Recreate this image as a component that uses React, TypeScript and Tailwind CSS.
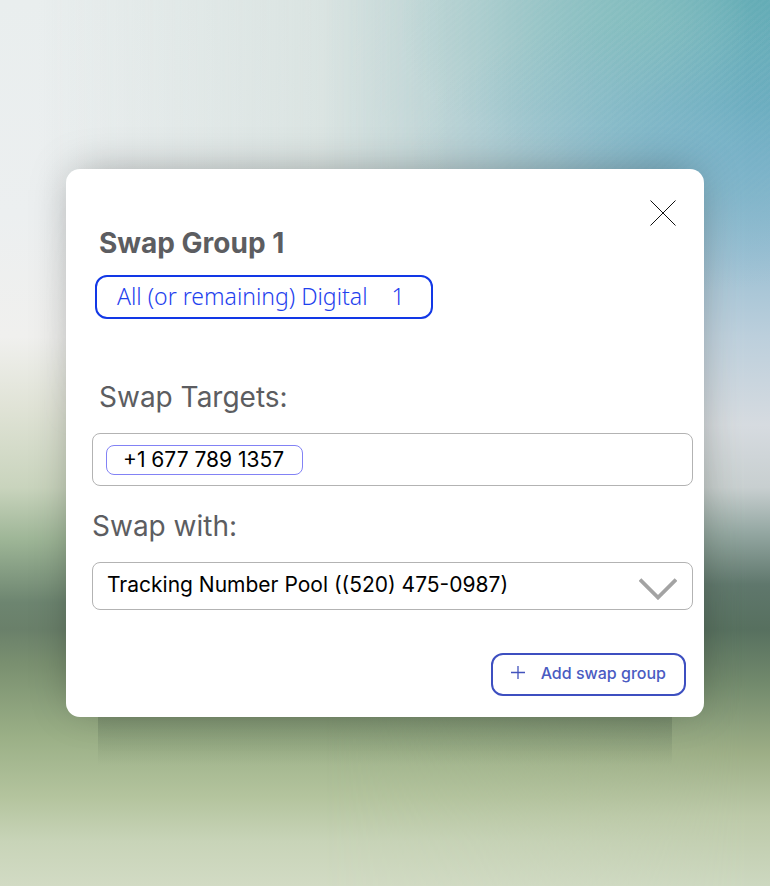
import { useState } from "react";

const pools = [
  {
    label: "Tracking Number Pool ((520) 475-0987)",
    value: "pool-520-475-0987",
  },
] as const;

const targets = ["+1 677 789 1357"];

const Backdrop = () => (
  <div className="absolute inset-0 -z-10 overflow-hidden bg-[linear-gradient(to_bottom,#e9eeee_0%,#eceff0_24%,#f0f0ee_38%,#e0e3d6_46%,#c9d4bd_55%,#9db596_61%,#6d8570_68%,#6a806a_71%,#7a9070_75%,#9aaf86_83%,#b4c49e_90%,#c8d4b8_95%,#d2dbc4_100%)]">
    <div className="absolute inset-x-0 top-0 h-1/2 bg-[linear-gradient(to_right,transparent_5%,#d3dfdc_58%)] [mask-image:linear-gradient(to_bottom,black_40%,transparent)]" />
    <div className="absolute inset-0 bg-[linear-gradient(to_bottom,#5ba7b4_0%,#62a8bb_12%,#80b4c9_20%,#9cc0d3_29%,#bccfdc_38%,#d6dbe0_48%,#c8cfd0_55%,#95a8a3_60%,#5f776c_66%,#57705f_71%,#71896c_77%,#9dae86_85%,#bcc9a8_92%,#cdd8c0_100%)] [mask-image:linear-gradient(to_right,transparent_42%,rgba(0,0,0,0.25)_62%,rgba(0,0,0,0.6)_80%,black_97%)]" />
    <div className="absolute inset-0 bg-[radial-gradient(ellipse_240px_140px_at_83%_3%,#84bfbdb3_0%,#84bfbd40_50%,transparent_100%)]" />
    <div className="absolute inset-0 bg-[radial-gradient(ellipse_280px_140px_at_90%_17%,#79b3c9b3_0%,#79b3c940_50%,transparent_100%)]" />
    <div className="absolute inset-x-0 top-0 h-1/3 bg-[repeating-linear-gradient(140deg,#ffffff0c_0px,#ffffff0c_2px,transparent_3px,transparent_5px)] [mask-image:radial-gradient(ellipse_at_85%_20%,black,transparent_60%)]" />
  </div>
);

const CloseIcon = () => (
  <svg width="26" height="26" viewBox="0 0 26 26" fill="none">
    <path d="M0.5 0.5 25.5 25.5M25.5 0.5 0.5 25.5" stroke="#111" />
  </svg>
);

const PlusIcon = () => (
  <svg width="14" height="14" viewBox="0 0 14 14" fill="none">
    <path d="M7 0v13M0 6.5h14" stroke="#4253bd" strokeWidth="1.3" />
  </svg>
);

const ChevronIcon = () => (
  <svg
    className="pointer-events-none absolute top-4 right-4"
    width="38"
    height="22"
    viewBox="0 0 38 22"
    fill="none"
  >
    <path d="m1 1.5 18 18L37 1.5" stroke="#a3a3a3" strokeWidth="3.8" />
  </svg>
);

export default function App() {
  const [pool, setPool] = useState<string>(pools[0].value);
  const [draft, setDraft] = useState("");

  return (
    <main className="relative isolate flex min-h-screen items-center justify-center px-[66px] py-8 font-['Inter',sans-serif]">
      <Backdrop />
      <div className="relative w-full max-w-2xl">
        <div className="absolute inset-x-8 top-full h-12 bg-linear-to-b from-[#4b5f4a]/30 to-transparent" />
        <form
          className="relative rounded-[14px] bg-white pt-6 pr-[11px] pb-[21px] pl-[26px] shadow-[0_-4px_44px_-10px_rgba(0,0,0,0.36)]"
          onSubmit={(e) => e.preventDefault()}
        >
          <div className="flex items-start justify-between">
            <h1 className="mt-[30px] ml-[7px] text-[28px] leading-10 font-bold text-[#5c5d61]">
              Swap Group 1
            </h1>
            <button
              type="button"
              aria-label="Close"
              className="mr-[10px] flex h-10 w-10 items-center justify-center"
            >
              <CloseIcon />
            </button>
          </div>

          <button
            type="button"
            className="mt-3 ml-[3px] flex h-11 items-center gap-6 rounded-xl border-2 border-[#1238e6] pr-[26px] pb-[2px] pl-5 font-['Noto_Sans',sans-serif] text-[23px] font-light text-[#1f42ee]"
          >
            <span>All (or remaining) Digital</span>
            <span>1</span>
          </button>

          <label
            htmlFor="targets"
            className="mt-[58px] ml-[7px] block text-[28px] leading-10 text-[#5c5d61]"
          >
            Swap Targets:
          </label>
          <div className="mt-4 flex h-[53px] items-center rounded-lg border border-[#b3b3b3] px-[13px]">
            {targets.map((target) => (
              <span
                key={target}
                className="h-[30px] shrink-0 rounded-lg border border-[#8282f5] px-4 pr-[18px] text-[21px] leading-7 text-black"
              >
                {target}
              </span>
            ))}
            <input
              id="targets"
              value={draft}
              onChange={(e) => setDraft(e.target.value)}
              className="ml-3 min-w-0 flex-1 text-[21px] outline-none"
            />
          </div>

          <label
            htmlFor="pool"
            className="mt-5 block text-[28px] leading-10 text-[#5c5d61]"
          >
            Swap with:
          </label>
          <div className="relative mt-4">
            <select
              id="pool"
              value={pool}
              onChange={(e) => setPool(e.target.value)}
              className="block h-12 w-full appearance-none rounded-lg border border-[#b3b3b3] bg-white pr-16 pb-[2px] pl-[14px] text-[21px] text-black"
            >
              {pools.map((p) => (
                <option key={p.value} value={p.value}>
                  {p.label}
                </option>
              ))}
            </select>
            <ChevronIcon />
          </div>

          <div className="mt-[43px] mr-[7px] flex justify-end">
            <button
              type="submit"
              className="flex h-[43px] items-center gap-4 rounded-xl border-2 border-[#3d4fc0] px-[18px] pb-1 text-[16px] font-medium text-[#4a5bc2]"
            >
              <PlusIcon />
              Add swap group
            </button>
          </div>
        </form>
      </div>
    </main>
  );
}
